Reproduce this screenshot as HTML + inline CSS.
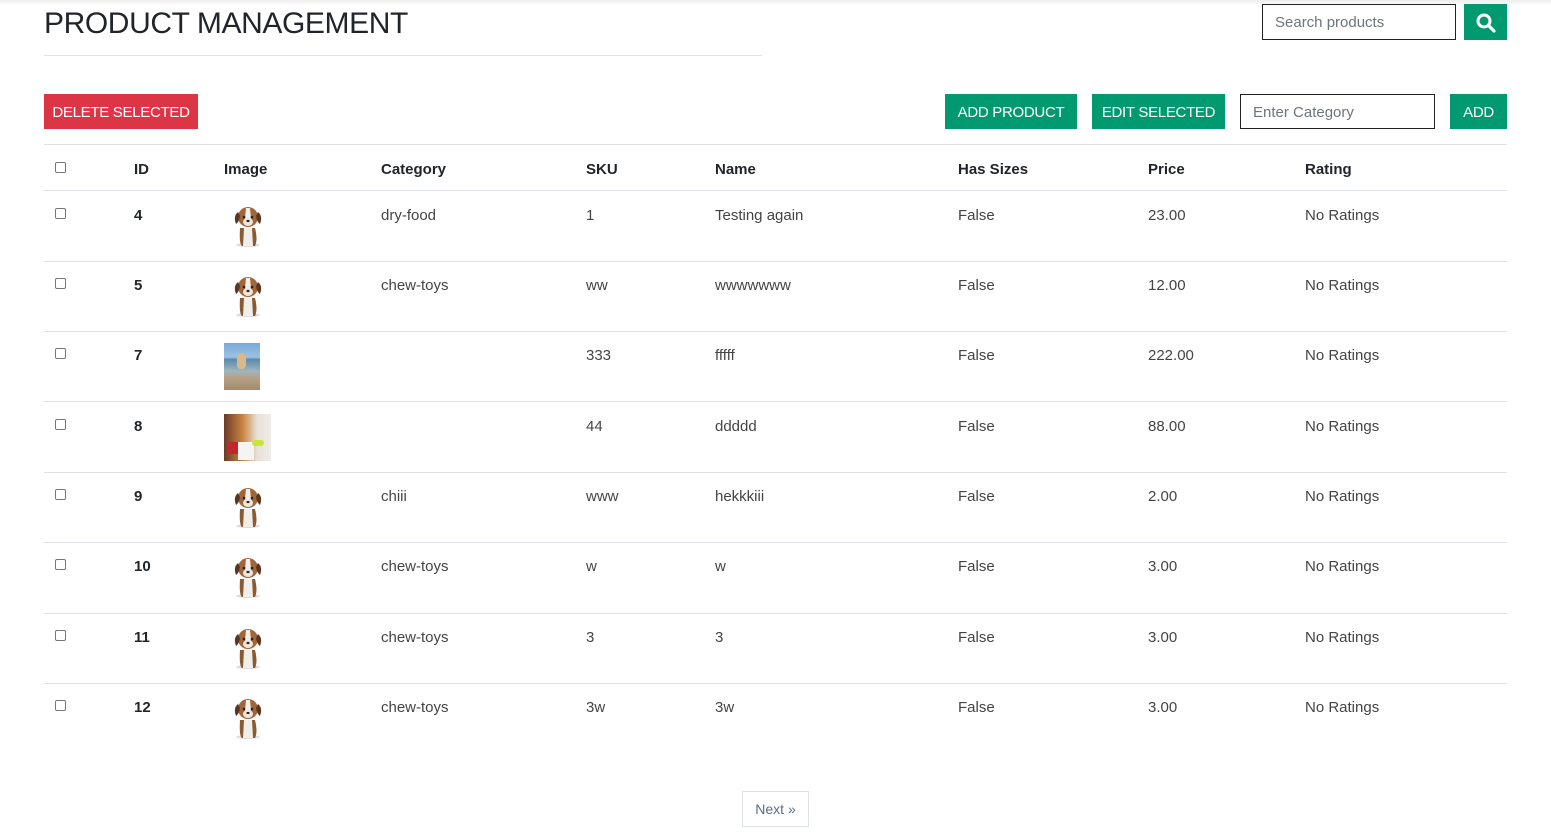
<!DOCTYPE html>
<html><head><meta charset="utf-8"><style>
*{box-sizing:border-box;margin:0;padding:0}
body{width:1551px;height:832px;background:#fff;font-family:"Liberation Sans",sans-serif;color:#212529;position:relative;overflow:hidden}
.a{position:absolute;white-space:nowrap}
.top{position:absolute;left:0;top:0;width:1551px;height:6px;background:linear-gradient(#eee,#fff)}
h1{position:absolute;left:44px;top:7px;font-size:30px;font-weight:normal;letter-spacing:-0.4px;color:#212529}
.hr{position:absolute;left:44px;top:55px;width:718px;height:1px;background:#e2e2e2}
.btn{position:absolute;color:#fff;font-size:15px;display:flex;align-items:center;justify-content:center;height:35px;letter-spacing:-0.3px;padding-top:1px}
.g{background:#009970}.r{background:#dc3545}
.inp{position:absolute;border:1px solid #222;color:#6c757d;font-size:15px;padding-left:12px;display:flex;align-items:center;height:36px;padding-top:1px}
.line{position:absolute;left:44px;width:1463px;height:1px;background:#dee2e6}
.cb{position:absolute;left:55px;width:11px;height:11px;border:1px solid #767676;border-radius:2px;background:#fff}
.t{position:absolute;font-size:15px;color:#444;margin-top:1px}
.h{position:absolute;font-size:15px;font-weight:bold;color:#212529;top:161px}
.id{font-weight:bold;color:#212529}
</style></head><body>
<div class="top"></div>
<h1>PRODUCT MANAGEMENT</h1>
<div class="hr"></div>
<div class="inp" style="left:1262px;top:4px;width:194px">Search products</div>
<div class="btn g" style="left:1464px;top:4px;width:43px;height:36px"><svg width="20" height="20" viewBox="0 0 20 20"><circle cx="8" cy="8" r="6" fill="none" stroke="#fff" stroke-width="3"/><path d="M12.5 12.5L18 18" stroke="#fff" stroke-width="3.2" stroke-linecap="round"/></svg></div>
<div class="btn r" style="left:44px;top:94px;width:154px">DELETE SELECTED</div>
<div class="btn g" style="left:945px;top:94px;width:132px">ADD PRODUCT</div>
<div class="btn g" style="left:1092px;top:94px;width:133px">EDIT SELECTED</div>
<div class="inp" style="left:1240px;top:94px;width:195px;height:35px">Enter Category</div>
<div class="btn g" style="left:1450px;top:94px;width:57px">ADD</div>
<div class="line" style="top:144px"></div>
<div class="cb" style="top:162px"></div>
<div class="h" style="left:134px">ID</div>
<div class="h" style="left:224px">Image</div>
<div class="h" style="left:381px">Category</div>
<div class="h" style="left:586px">SKU</div>
<div class="h" style="left:715px">Name</div>
<div class="h" style="left:958px">Has Sizes</div>
<div class="h" style="left:1148px">Price</div>
<div class="h" style="left:1305px">Rating</div>
<svg width="0" height="0" style="position:absolute"><defs>
<g id="dog">
<ellipse cx="17" cy="41" rx="12" ry="2" fill="#ddd"/>
<path d="M9 24 Q8 40 11 42 L24 42 Q27 36 24 24 Z" fill="#8a5a34"/>
<path d="M13 24 L12 42 L22 42 L21 24Z" fill="#f2eee8"/>
<ellipse cx="17" cy="13" rx="10" ry="10" fill="#a0653a"/>
<path d="M7 8 Q2 12 5 20 Q8 18 9 12Z" fill="#5a3620"/>
<path d="M27 8 Q32 12 29 20 Q26 18 25 12Z" fill="#5a3620"/>
<path d="M15 4 L19 4 L20 14 Q17 22 14 14Z" fill="#f3eee6"/>
<ellipse cx="17" cy="18" rx="5" ry="4" fill="#eee6dc"/>
<circle cx="13" cy="13" r="1.3" fill="#222"/><circle cx="21" cy="13" r="1.3" fill="#222"/>
<ellipse cx="17" cy="17" rx="1.6" ry="1.1" fill="#222"/>
</g></defs></svg>
<div class="line" style="top:190px"></div>
<div class="cb" style="top:208px"></div><div class="t id" style="left:134px;top:206px">4</div><svg class="a" style="left:231px;top:204px" width="34" height="46"><use href="#dog"/></svg><div class="t" style="left:381px;top:206px">dry-food</div><div class="t" style="left:586px;top:206px">1</div><div class="t" style="left:715px;top:206px">Testing again</div><div class="t" style="left:958px;top:206px">False</div><div class="t" style="left:1148px;top:206px">23.00</div><div class="t" style="left:1305px;top:206px">No Ratings</div>
<div class="line" style="top:261px"></div>
<div class="cb" style="top:278px"></div><div class="t id" style="left:134px;top:276px">5</div><svg class="a" style="left:231px;top:274px" width="34" height="46"><use href="#dog"/></svg><div class="t" style="left:381px;top:276px">chew-toys</div><div class="t" style="left:586px;top:276px">ww</div><div class="t" style="left:715px;top:276px">wwwwwww</div><div class="t" style="left:958px;top:276px">False</div><div class="t" style="left:1148px;top:276px">12.00</div><div class="t" style="left:1305px;top:276px">No Ratings</div>
<div class="line" style="top:331px"></div>
<div class="cb" style="top:348px"></div><div class="t id" style="left:134px;top:346px">7</div>
<div class="a" style="left:224px;top:343px;width:36px;height:47px;background:linear-gradient(#7aa9d6 0%,#9cc2e4 30%,#5d8ba8 35%,#9fb5bd 60%,#b69f82 75%,#a48a6c 100%)"><div class="a" style="left:13px;top:10px;width:9px;height:16px;background:#d9b989;border-radius:4px"></div></div>
<div class="t" style="left:586px;top:346px">333</div><div class="t" style="left:715px;top:346px">fffff</div><div class="t" style="left:958px;top:346px">False</div><div class="t" style="left:1148px;top:346px">222.00</div><div class="t" style="left:1305px;top:346px">No Ratings</div>
<div class="line" style="top:401px"></div>
<div class="cb" style="top:419px"></div><div class="t id" style="left:134px;top:417px">8</div>
<div class="a" style="left:224px;top:414px;width:47px;height:47px;background:linear-gradient(90deg,#6b3b2a,#c9853f 40%,#e7e1d8 70%,#f0ece6)"><div class="a" style="left:4px;top:28px;width:12px;height:12px;background:#c0262a"></div><div class="a" style="left:14px;top:28px;width:16px;height:18px;background:#f4f4f4"></div><div class="a" style="left:28px;top:26px;width:12px;height:6px;background:#c8e639;border-radius:3px"></div></div>
<div class="t" style="left:586px;top:417px">44</div><div class="t" style="left:715px;top:417px">ddddd</div><div class="t" style="left:958px;top:417px">False</div><div class="t" style="left:1148px;top:417px">88.00</div><div class="t" style="left:1305px;top:417px">No Ratings</div>
<div class="line" style="top:472px"></div>
<div class="cb" style="top:489px"></div><div class="t id" style="left:134px;top:487px">9</div><svg class="a" style="left:231px;top:485px" width="34" height="46"><use href="#dog"/></svg><div class="t" style="left:381px;top:487px">chiii</div><div class="t" style="left:586px;top:487px">www</div><div class="t" style="left:715px;top:487px">hekkkiii</div><div class="t" style="left:958px;top:487px">False</div><div class="t" style="left:1148px;top:487px">2.00</div><div class="t" style="left:1305px;top:487px">No Ratings</div>
<div class="line" style="top:542px"></div>
<div class="cb" style="top:559px"></div><div class="t id" style="left:134px;top:557px">10</div><svg class="a" style="left:231px;top:555px" width="34" height="46"><use href="#dog"/></svg><div class="t" style="left:381px;top:557px">chew-toys</div><div class="t" style="left:586px;top:557px">w</div><div class="t" style="left:715px;top:557px">w</div><div class="t" style="left:958px;top:557px">False</div><div class="t" style="left:1148px;top:557px">3.00</div><div class="t" style="left:1305px;top:557px">No Ratings</div>
<div class="line" style="top:613px"></div>
<div class="cb" style="top:630px"></div><div class="t id" style="left:134px;top:628px">11</div><svg class="a" style="left:231px;top:626px" width="34" height="46"><use href="#dog"/></svg><div class="t" style="left:381px;top:628px">chew-toys</div><div class="t" style="left:586px;top:628px">3</div><div class="t" style="left:715px;top:628px">3</div><div class="t" style="left:958px;top:628px">False</div><div class="t" style="left:1148px;top:628px">3.00</div><div class="t" style="left:1305px;top:628px">No Ratings</div>
<div class="line" style="top:683px"></div>
<div class="cb" style="top:700px"></div><div class="t id" style="left:134px;top:698px">12</div><svg class="a" style="left:231px;top:696px" width="34" height="46"><use href="#dog"/></svg><div class="t" style="left:381px;top:698px">chew-toys</div><div class="t" style="left:586px;top:698px">3w</div><div class="t" style="left:715px;top:698px">3w</div><div class="t" style="left:958px;top:698px">False</div><div class="t" style="left:1148px;top:698px">3.00</div><div class="t" style="left:1305px;top:698px">No Ratings</div>
<div class="a" style="left:742px;top:791px;width:67px;height:36px;border:1px solid #dee2e6;color:#5a6e86;font-size:14px;display:flex;align-items:center;justify-content:center">Next »</div>
</body></html>
